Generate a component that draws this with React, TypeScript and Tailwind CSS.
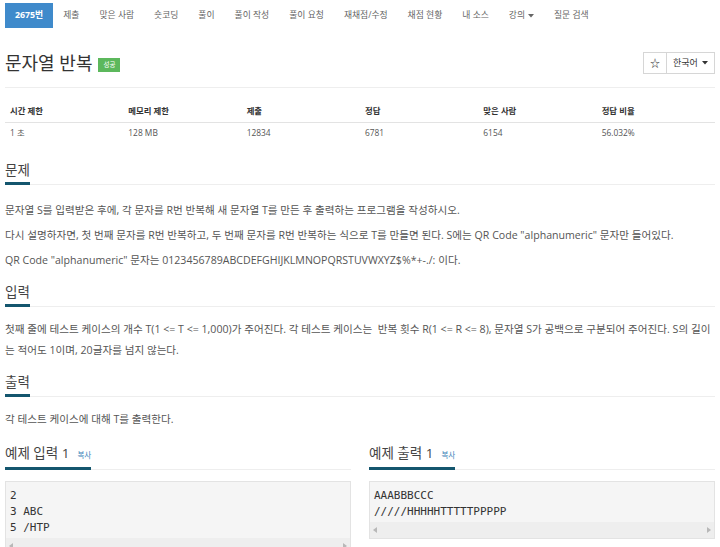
import React from 'react';

const font = { fontFamily: '"Open Sans", "Noto Sans CJK KR", sans-serif' };

const navItems = ['제출', '맞은 사람', '숏코딩', '풀이', '풀이 작성', '풀이 요청', '재채점/수정', '채점 현황', '내 소스'];

const Caret = () => (
  <svg width="6" height="4" viewBox="0 0 6 4" className="ml-[3px]">
    <path d="M0 0 L6 0 L3 3.5 Z" fill="currentColor" />
  </svg>
);

const Heading = ({ children, extra }: { children: React.ReactNode; extra?: boolean }) => (
  <div className="flex border-b border-[#eeeeee]">
    <div className="-mb-px border-b-[3px] border-[#14566e] pb-[2px] text-[13.5px] leading-[20px] text-[#444]">
      {children}
      {extra && <span className="ml-[8px] text-[7.5px] text-[#3a7fb8]">복사</span>}
    </div>
  </div>
);

const P = ({ children }: { children: React.ReactNode }) => (
  <p className="mb-[4px] text-[10.6px] leading-[21px] text-[#555]">{children}</p>
);

const Arrows = () => (
  <div className="flex h-[16px] items-center justify-between bg-[#eeeeee] px-[3px]">
    <svg width="4" height="6" viewBox="0 0 4 6">
      <path d="M4 0 L0 3 L4 6 Z" fill="#b8b8b8" />
    </svg>
    <svg width="4" height="6" viewBox="0 0 4 6">
      <path d="M0 0 L4 3 L0 6 Z" fill="#b8b8b8" />
    </svg>
  </div>
);

const Sample = ({ title, lines }: { title: string; lines: string[] }) => (
  <div>
    <Heading extra>{title}</Heading>
    <div className="mt-[11px] border border-[#e3e3e3] bg-[#f5f5f5]">
      <pre
        className="px-[4px] pt-[6px] pb-[2px] text-[11px] leading-[16px] text-[#333]"
        style={{ fontFamily: '"DejaVu Sans Mono", monospace' }}
      >
        {lines.join('\n')}
      </pre>
      <Arrows />
    </div>
  </div>
);

const stats = [
  ['시간 제한', '1 초'],
  ['메모리 제한', '128 MB'],
  ['제출', '12834'],
  ['정답', '6781'],
  ['맞은 사람', '6154'],
  ['정답 비율', '56.032%'],
];

const App = () => {
  return (
    <div className="h-[547px] w-[720px] overflow-hidden bg-white px-[5px] text-[#333]" style={font}>
      <nav className="flex pt-[3px] text-[8.8px] text-[#666]">
        <div className="flex h-[25px] items-center bg-[#3f8acb] px-[10px] font-bold text-white">2675번</div>
        {navItems.map((n) => (
          <div key={n} className="flex h-[25px] items-center px-[10px]">
            {n}
          </div>
        ))}
        <div className="flex h-[25px] items-center px-[10px]">
          강의
          <Caret />
        </div>
        <div className="flex h-[25px] items-center px-[10px]">질문 검색</div>
      </nav>

      <div className="mt-[22px] flex h-[26px] items-center justify-between">
        <div className="flex items-center">
          <h1 className="text-[18px] leading-[26px] text-[#333]">문자열 반복</h1>
          <span className="ml-[6px] mt-[4px] flex h-[14px] items-center bg-[#5cb85c] px-[5px] text-[6.5px] text-white">
            성공
          </span>
        </div>
        <div className="flex h-[22px] text-[9px] text-[#333]">
          <div className="flex w-[24px] items-center justify-center border border-[#d6d6d6] text-[10px]">☆</div>
          <div className="-ml-px flex w-[49px] items-center justify-between border border-[#d6d6d6] pl-[6px] pr-[6px]">
            한국어
            <Caret />
          </div>
        </div>
      </div>
      <div className="mt-[11px] border-b border-[#eeeeee]" />

      <div className="mt-[13px]">
        <div className="grid h-[22px] grid-cols-6 items-center border-b border-[#e3e3e3] text-[8.4px] font-bold text-[#333]">
          {stats.map((s) => (
            <div key={s[0]} className="px-[5px]">
              {s[0]}
            </div>
          ))}
        </div>
        <div className="grid h-[21px] grid-cols-6 items-center text-[8.4px] text-[#555]">
          {stats.map((s) => (
            <div key={s[0]} className="px-[5px]">
              {s[1]}
            </div>
          ))}
        </div>
      </div>

      <section className="mt-[16px]">
        <Heading>문제</Heading>
        <div className="mt-[15px]">
          <P>문자열 S를 입력받은 후에, 각 문자를 R번 반복해 새 문자열 T를 만든 후 출력하는 프로그램을 작성하시오.</P>
          <P>
            다시 설명하자면, 첫 번째 문자를 R번 반복하고, 두 번째 문자를 R번 반복하는 식으로 T를 만들면 된다. S에는 QR
            Code "alphanumeric" 문자만 들어있다.
          </P>
          <P>QR Code "alphanumeric" 문자는 0123456789ABCDEFGHIJKLMNOPQRSTUVWXYZ$%*+-./: 이다.</P>
        </div>
      </section>

      <section className="mt-[11px]">
        <Heading>입력</Heading>
        <div className="mt-[12px]">
          <P>
            첫째 줄에 테스트 케이스의 개수 T(1 &lt;= T &lt;= 1,000)가 주어진다. 각 테스트 케이스는 &nbsp;반복 횟수 R(1 &lt;= R
            &lt;= 8), 문자열 S가 공백으로 구분되어 주어진다. S의 길이는 적어도 1이며, 20글자를 넘지 않는다.
          </P>
        </div>
      </section>

      <section className="mt-[11px]">
        <Heading>출력</Heading>
        <div className="mt-[12px]">
          <P>각 테스트 케이스에 대해 T를 출력한다.</P>
        </div>
      </section>

      <div className="mt-[13px] grid grid-cols-2 gap-[18px]">
        <Sample title="예제 입력 1" lines={['2', '3 ABC', '5 /HTP']} />
        <Sample title="예제 출력 1" lines={['AAABBBCCC', '/////HHHHHTTTTTPPPPP']} />
      </div>
    </div>
  );
};

export default App;
